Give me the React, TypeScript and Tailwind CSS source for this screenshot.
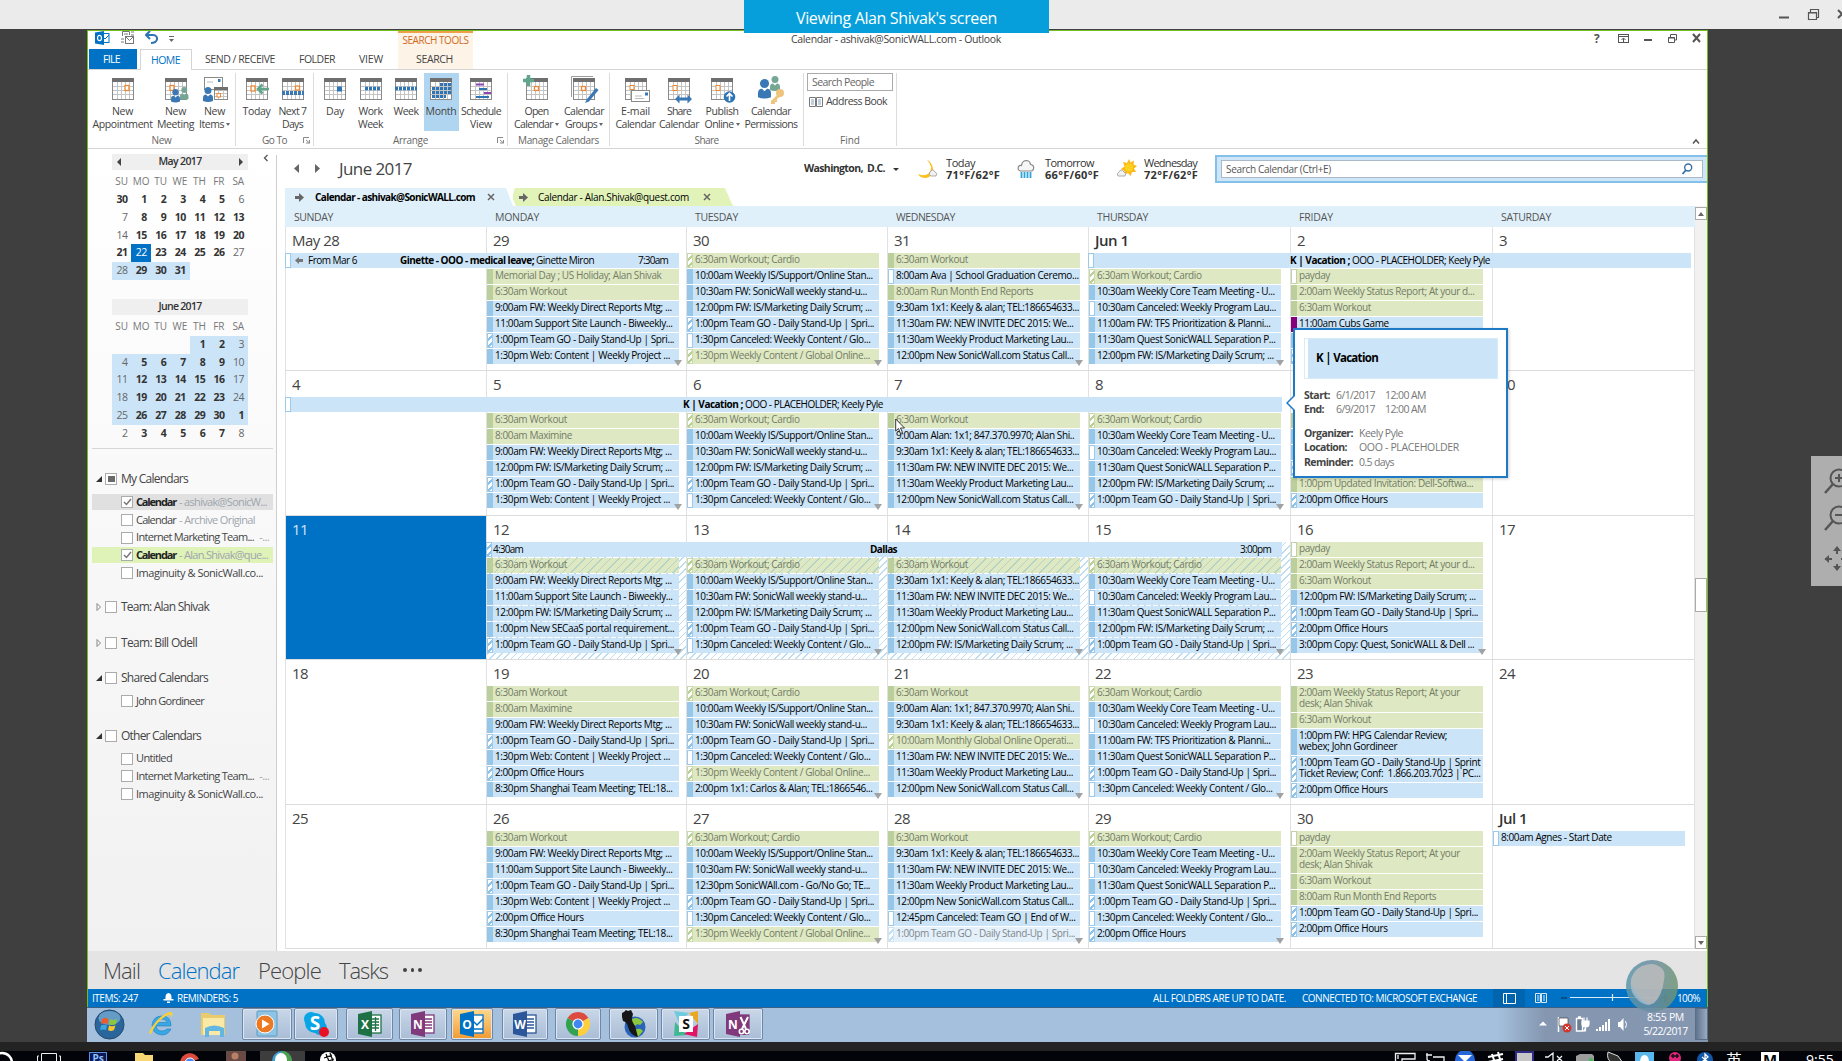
import React, { useLayoutEffect, useRef, ReactNode } from "react";

/** Text whose tracking is adjusted so that it fills exactly `w` pixels. */
function Fit({ w, className = "", children }: { w: number; className?: string; children: ReactNode }) {
  const ref = useRef<HTMLSpanElement>(null);
  useLayoutEffect(() => {
    const el = ref.current;
    if (!el) return;
    el.style.letterSpacing = "0px";
    const natural = el.getBoundingClientRect().width;
    const n = (el.textContent || "").length;
    el.style.letterSpacing = `${(w - natural) / n}px`;
  }, [w]);
  return (
    <span ref={ref} className={`inline-block whitespace-pre ${className}`}>
      {children}
    </span>
  );
}

/* ---------- calendar data: first char = colour (b/g/l), second = status (b/t/f/o) ---------- */
const WORK = "gb6:30am Workout";
const CARDIO = "gt6:30am Workout; Cardio";
const DIRECT = "bb9:00am FW: Weekly Direct Reports Mtg; ...";
const SITE = "bb11:00am Support Site Launch - Biweekly...";
const TEAM = "bt1:00pm Team GO - Daily Stand-Up | Spri...";
const WEB = "bb1:30pm Web: Content | Weekly Project ...";
const SUPPORT = "bb10:00am Weekly IS/Support/Online Stan...";
const STAND = "bb10:30am FW: SonicWall weekly stand-u...";
const SCRUM = "bb12:00pm FW: IS/Marketing Daily Scrum; ...";
const CANCEL = "bf1:30pm Canceled: Weekly Content / Glo...";
const GLOBAL = "gt1:30pm Weekly Content / Global Online...";
const KEELY = "bb9:30am 1x1: Keely & alan; TEL:186654633...";
const INVITE = "bb11:30am FW: NEW INVITE DEC 2015: We...";
const PRODUCT = "bb11:30am Weekly Product Marketing Lau...";
const STATUS = "bb12:00pm New SonicWall.com Status Call...";
const CORE = "bb10:30am Weekly Core Team Meeting - U...";
const PROGRAM = "bf10:30am Canceled: Weekly Program Lau...";
const TFS = "bb11:00am FW: TFS Prioritization & Planni...";
const QUEST = "bb11:30am Quest SonicWALL Separation P...";
const HOURS = "bt2:00pm Office Hours";
const ALAN = "bb9:00am Alan: 1x1; 847.370.9970; Alan Shi..";
const PAYDAY = "gfpayday";
const REPORT = "gb2:00am Weekly Status Report; At your d...";
const REPORT2 = "gb2:00am Weekly Status Report; At your\ndesk; Alan Shivak";
const SHANGHAI = "bb8:30pm Shanghai Team Meeting; TEL:18...";
const MAX = "gb8:00am Maximine";
const MONTH_END = "gb8:00am Run Month End Reports";

type Day = { n: string; ev?: string[]; skip?: boolean; more?: boolean; bold?: boolean; sel?: boolean; hatch?: boolean };

const weeks: Day[][] = [
  [
    { n: "May 28" },
    { n: "29", skip: true, more: true, ev: ["gbMemorial Day ; US Holiday; Alan Shivak", WORK, DIRECT, SITE, TEAM, WEB] },
    { n: "30", more: true, ev: [CARDIO, SUPPORT, STAND, SCRUM, TEAM, CANCEL, GLOBAL] },
    { n: "31", more: true, ev: [WORK, "bf8:00am Ava | School Graduation Ceremo...", MONTH_END, KEELY, INVITE, PRODUCT, STATUS] },
    { n: "Jun 1", bold: true, skip: true, more: true, ev: [CARDIO, CORE, PROGRAM, TFS, QUEST, SCRUM] },
    { n: "2", skip: true, ev: [PAYDAY, REPORT, WORK, "bo11:00am Cubs Game", "bb", "bt"] },
    { n: "3" },
  ],
  [
    { n: "4" },
    { n: "5", skip: true, more: true, ev: [WORK, MAX, DIRECT, SCRUM, TEAM, WEB] },
    { n: "6", skip: true, more: true, ev: [CARDIO, SUPPORT, STAND, SCRUM, TEAM, CANCEL] },
    { n: "7", skip: true, more: true, ev: [WORK, ALAN, KEELY, INVITE, PRODUCT, STATUS] },
    { n: "8", skip: true, more: true, ev: [CARDIO, CORE, PROGRAM, QUEST, SCRUM, TEAM] },
    { n: "9", skip: true, ev: ["gb", "bb", "bb", "bt", "gb1:00pm Updated Invitation: Dell-Softwa...", HOURS] },
    { n: "10" },
  ],
  [
    { n: "11", sel: true },
    { n: "12", skip: true, more: true, hatch: true, ev: [WORK, DIRECT, SITE, SCRUM, "bb1:00pm New SECaaS portal requirement...", TEAM] },
    { n: "13", skip: true, more: true, hatch: true, ev: [CARDIO, SUPPORT, STAND, SCRUM, TEAM, CANCEL] },
    { n: "14", skip: true, more: true, hatch: true, ev: [WORK, KEELY, INVITE, PRODUCT, STATUS, SCRUM] },
    { n: "15", skip: true, more: true, hatch: true, ev: [CARDIO, CORE, PROGRAM, QUEST, SCRUM, TEAM] },
    { n: "16", more: true, ev: [PAYDAY, REPORT, WORK, SCRUM, TEAM, HOURS, "bb3:00pm Copy: Quest, SonicWALL & Dell ..."] },
    { n: "17" },
  ],
  [
    { n: "18" },
    { n: "19", ev: [WORK, MAX, DIRECT, TEAM, WEB, HOURS, SHANGHAI] },
    { n: "20", more: true, ev: [CARDIO, SUPPORT, STAND, TEAM, CANCEL, GLOBAL, "bb2:00pm 1x1: Carlos & Alan; TEL:1866546..."] },
    { n: "21", more: true, ev: [WORK, ALAN, KEELY, "gt10:00am Monthly Global Online Operati...", INVITE, PRODUCT, STATUS] },
    { n: "22", more: true, ev: [CARDIO, CORE, PROGRAM, TFS, QUEST, TEAM, CANCEL] },
    {
      n: "23",
      ev: [
        REPORT2,
        WORK,
        "bb1:00pm FW: HPG Calendar Review;\nwebex; John Gordineer",
        "bt1:00pm Team GO - Daily Stand-Up | Sprint\nTicket Review; Conf:  1.866.203.7023 | PC...",
        HOURS,
      ],
    },
    { n: "24" },
  ],
  [
    { n: "25" },
    { n: "26", ev: [WORK, DIRECT, SITE, TEAM, WEB, HOURS, SHANGHAI] },
    { n: "27", more: true, ev: [CARDIO, SUPPORT, STAND, "bb12:30pm SonicWAll.com - Go/No Go; TE...", TEAM, CANCEL, GLOBAL] },
    { n: "28", more: true, ev: [WORK, KEELY, INVITE, PRODUCT, STATUS, "bf12:45pm Canceled: Team GO | End of W...", "lt1:00pm Team GO - Daily Stand-Up | Spri..."] },
    { n: "29", more: true, ev: [CARDIO, CORE, PROGRAM, QUEST, TEAM, CANCEL, HOURS] },
    { n: "30", ev: [PAYDAY, REPORT2, WORK, MONTH_END, TEAM, HOURS] },
    { n: "Jul 1", bold: true, ev: ["bf8:00am Agnes - Start Date"] },
  ],
];

const bgs: Record<string, string> = {
  b: "bg-[#cbe4f7] text-black",
  g: "bg-[#dee9c3] text-[#747b66]",
  l: "bg-[#e4f1fb] text-[#80868c]",
};
const bars: Record<string, string> = {
  bb: "bg-[#96c6e8]",
  bt: "border border-[#9ccaec] bg-[repeating-linear-gradient(135deg,#fff_0px,#fff_3px,#8cc3ea_3px,#8cc3ea_5px)]",
  bf: "border border-[#9ccaec] bg-white",
  bo: "bg-[#86007d]",
  gb: "bg-[#bbcf9c]",
  gt: "border border-[#c9d9a9] bg-[repeating-linear-gradient(135deg,#fff_0px,#fff_3px,#b9d094_3px,#b9d094_5px)]",
  gf: "border border-[#c3d2a4] bg-white",
  lt: "border border-[#cfe4f5] bg-[repeating-linear-gradient(135deg,#fff_0px,#fff_3px,#c4e0f4_3px,#c4e0f4_5px)]",
};

function EventRow({ code, hatch }: { code: string; hatch?: boolean }) {
  const text = code.slice(2);
  const two = text.includes("\n");
  return (
    <div className={`flex ${two ? "h-[26px]" : "h-[15px]"} w-[192px] shrink-0 ${bgs[code[0]]}`}>
      <div className={`w-[6px] shrink-0 ${bars[code.slice(0, 2)]}`} />
      <div
        className={`flex-1 whitespace-pre pl-[2px] text-[10px] tracking-[-0.4px] ${two ? "leading-[11px] pt-px" : "leading-[13px]"} ${
          hatch && code[0] === "g" ? "bg-[repeating-linear-gradient(135deg,transparent_0px,transparent_5px,#b5d3c4_5px,#b5d3c4_6px)]" : ""
        }`}
      >
        {text}
      </div>
    </div>
  );
}

function DayCell({ d, col }: { d: Day; col: number }) {
  const cols = ["col-start-1", "col-start-2", "col-start-3", "col-start-4", "col-start-5", "col-start-6", "col-start-7"];
  return (
    <div className={`${cols[col]} relative row-start-1 flex flex-col border-l border-[#e1e1e1] ${d.sel ? "bg-[#0072c6]" : ""}`}>
      <div
        className={`h-[26px] shrink-0 pl-[6px] text-[15px] leading-[26px] tracking-[-0.5px] ${
          d.sel ? "text-[#cfe6fa]" : d.bold ? "font-semibold text-[#333]" : "text-[#444]"
        }`}
      >
        {d.n}
      </div>
      <div
        className={`flex flex-1 flex-col gap-px ${d.skip ? "pt-4" : ""} ${
          d.hatch ? "bg-[repeating-linear-gradient(135deg,#fff_0px,#fff_4px,#bcdcf2_4px,#bcdcf2_5px)]" : ""
        }`}
      >
        {(d.ev || []).map((e, i) => (
          <EventRow key={i} code={e} hatch={d.hatch} />
        ))}
      </div>
      {d.more && <div className="absolute left-[187px] top-[133px] h-0 w-0 border-x-4 border-t-[6px] border-x-transparent border-t-[#a2a2a2]" />}
    </div>
  );
}

function Vacation() {
  return (
    <Fit w={200}>
      <b>K | Vacation ; </b>OOO - PLACEHOLDER; Keely Pyle
    </Fit>
  );
}

function Banner({ place, bar, children }: { place: string; bar: string; children: ReactNode }) {
  return (
    <div className={`z-10 row-start-1 mt-[26px] flex h-[15px] bg-[#cbe4f7] text-[10px] leading-[15px] text-black ${place}`}>
      <div className={`w-[6px] shrink-0 ${bars[bar]}`} />
      <div className="flex flex-1">{children}</div>
    </div>
  );
}

const banners: (ReactNode | null)[] = [
  <>
    <Banner place="col-start-1 col-span-2 mr-[7px]" bar="bf">
      <span className="ml-[4px] mr-[5px] flex items-center">
        <svg width="8" height="7" viewBox="0 0 8 7"><path d="M0 3.5 4 0V2H8V5H4V7Z" fill="#777" /></svg>
      </span>
      <Fit w={49}>From Mar 6</Fit>
      <Fit w={194} className="ml-[43px]"><b>Ginette - OOO - medical leave; </b>Ginette Miron</Fit>
      <Fit w={30} className="ml-[44px]">7:30am</Fit>
    </Banner>
    <Banner place="col-start-5 col-span-3 mr-[3px]" bar="bf">
      <span className="ml-[196px]"><Vacation /></span>
    </Banner>
  </>,
  <Banner place="col-start-1 col-span-5 mr-[8px]" bar="bf">
    <span className="ml-[392px]"><Vacation /></span>
  </Banner>,
  <Banner place="col-start-2 col-span-4 mr-[8px]" bar="bt">
    <Fit w={30} className="ml-[1px]">4:30am</Fit>
    <Fit w={27} className="ml-[347px] font-bold">Dallas</Fit>
    <Fit w={31} className="ml-[343px]">3:00pm</Fit>
  </Banner>,
  null,
  null,
];

/* ---------- ribbon icons ---------- */
function Grid({ children, mark }: { children?: ReactNode; mark?: boolean }) {
  return (
    <svg width="28" height="28" viewBox="0 0 28 28" className="overflow-visible">
      <rect x="3.5" y="3.5" width="21" height="21" fill="#fff" stroke="#8a8a8a" />
      <path d="M4 11.5H24M4 15.5H24M4 19.5H24M8.5 7V24M12.5 7V24M16.5 7V24M20.5 7V24" stroke="#c4c4c4" />
      <rect x="3" y="3" width="22" height="4" fill="#6f6f6f" />
      {mark && <rect x="11.5" y="11.5" width="4" height="4" fill="#fff" stroke="#ed8733" strokeWidth="1.3" />}
      {children}
    </svg>
  );
}
function Person({ x, y, c }: { x: number; y: number; c: string }) {
  return (
    <g fill={c} transform={`translate(${x} ${y})`}>
      <circle cx="5" cy="3.5" r="3.5" />
      <path d="M0 14V11Q0 7.5 3 7.5L5 9.5 7 7.5Q10 7.5 10 11V14Q5 16 0 14Z" />
    </g>
  );
}
const icons: Record<string, ReactNode> = {
  appt: <Grid><rect x="16" y="10.5" width="4" height="5" fill="#fff" stroke="#ed8733" strokeWidth="1.3" /></Grid>,
  meet: (
    <Grid>
      <rect x="8" y="10.5" width="4" height="5" fill="#fff" stroke="#ed8733" strokeWidth="1.3" />
      <g transform="translate(18 12) scale(.85)"><Person x={0} y={0} c="#76a795" /></g>
      <g transform="translate(9 14) scale(.9)"><Person x={0} y={0} c="#3a78b5" /></g>
    </Grid>
  ),
  items: (
    <svg width="28" height="28" viewBox="0 0 28 28">
      <rect x="3.5" y="2.5" width="18" height="12" fill="#fff" stroke="#8a8a8a" />
      <rect x="17" y="4" width="2.5" height="3" fill="#3a78b5" />
      <path d="M6 7H12" stroke="#bbb" />
      <rect x="13.5" y="13.5" width="13" height="11" fill="#fff" stroke="#8a8a8a" />
      <rect x="13" y="12" width="14" height="3.5" fill="#6f6f6f" />
      <path d="M14 18.5H26M14 21.5H26M17.5 15V24M22.5 15V24" stroke="#c4c4c4" />
      <rect x="16" y="18.5" width="3.5" height="3.5" fill="#fff" stroke="#ed8733" />
      <Person x={2} y={12} c="#3a78b5" />
    </svg>
  ),
  today: (
    <Grid>
      <rect x="8" y="11" width="4" height="5" fill="#fff" stroke="#ed8733" strokeWidth="1.3" />
      <path d="M26 14H16M19.5 9.5 15 14 19.5 18.5" fill="none" stroke="#5fa68a" strokeWidth="2.6" />
    </Grid>
  ),
  next7: (
    <Grid>
      <rect x="16.5" y="11" width="4" height="4" fill="#fff" stroke="#ed8733" strokeWidth="1.3" />
      <path d="M3 18H25" stroke="#3a78b5" strokeWidth="4" strokeDasharray="3 1" />
    </Grid>
  ),
  day: <Grid><rect x="16" y="11.5" width="5" height="5" fill="#2e75b6" /></Grid>,
  work: <Grid><path d="M8 13.5H23" stroke="#2e75b6" strokeWidth="3.5" strokeDasharray="3 1" /></Grid>,
  week: <Grid><path d="M3 13.5H25" stroke="#2e75b6" strokeWidth="3.5" strokeDasharray="3 1" /></Grid>,
  month: <Grid><path d="M13 9.5H24M5 13.5H24M5 17.5H24" stroke="#2e75b6" strokeWidth="3" strokeDasharray="3 1" /><path d="M5 21.5H19" stroke="#2e75b6" strokeWidth="3" strokeDasharray="3 1" /></Grid>,
  sched: (
    <Grid>
      <path d="M9 9.5H17" stroke="#8b46b5" strokeWidth="2" />
      <path d="M12 14H20" stroke="#2e75b6" strokeWidth="2" />
      <path d="M17 18H24" stroke="#8b46b5" strokeWidth="2" />
      <path d="M9 22H22" stroke="#2e75b6" strokeWidth="2" />
    </Grid>
  ),
  open: <Grid mark><path d="M5.5 0V11M0 5.5H11" stroke="#5fa68a" strokeWidth="3.5" /></Grid>,
  groups: (
    <Grid mark>
      <path d="M1.5 22V1.5H23" fill="none" stroke="#9a9a9a" />
      <path d="M26 13 17 24 15 28 19 26.500 28.500 15Z" fill="#3a78b5" />
    </Grid>
  ),
  email: (
    <Grid>
      <rect x="8" y="10.5" width="4" height="4" fill="#fff" stroke="#ed8733" />
      <rect x="9.5" y="15.5" width="18" height="11" fill="#fff" stroke="#8a8a8a" />
      <rect x="23" y="17.5" width="3" height="3" fill="#3a78b5" />
      <path d="M13 21H20M13 23.5H22" stroke="#bbb" />
    </Grid>
  ),
  share: (
    <Grid>
      <rect x="8" y="10.5" width="4" height="5" fill="#fff" stroke="#ed8733" />
      <path d="M10 24 14.5 19.5V22.5H22.5V19.5L27 24 22.5 28.5V25.5H14.5V28.5Z" fill="#3a78b5" />
    </Grid>
  ),
  publish: (
    <Grid>
      <rect x="8" y="10.5" width="4" height="5" fill="#fff" stroke="#ed8733" />
      <circle cx="21.5" cy="22" r="5.8" fill="#2e75b6" />
      <path d="M21.5 26V19M18.5 21.5 21.5 18.5 24.5 21.5" fill="none" stroke="#fff" strokeWidth="1.6" />
    </Grid>
  ),
  perms: (
    <svg width="28" height="28" viewBox="0 0 28 28" className="overflow-visible">
      <g transform="translate(13 1)"><Person x={0} y={0} c="#76a795" /></g>
      <g transform="translate(1 4) scale(1.3)"><Person x={0} y={0} c="#3a78b5" /></g>
      <circle cx="23" cy="18" r="4" fill="#efc57e" />
      <path d="M21 19 14 26V29H18V27H20V24L24 21Z" fill="#efc57e" />
    </svg>
  ),
};

function Btn({ icon, w, a, b, wa, wb, arrow, active }: { icon: string; w: string; a: string; b?: string; wa: number; wb?: number; arrow?: boolean; active?: boolean }) {
  return (
    <div className={`${w} flex h-[58px] shrink-0 flex-col items-center text-[10.5px] leading-[13px] text-[#444] ${active ? "bg-[#b0d5f0]" : ""}`}>
      <div className="mt-[2px] h-[30px] w-[28px]">{icons[icon]}</div>
      <Fit w={wa}>{a}</Fit>
      {b && (
        <div className="flex items-center gap-[2px]">
          <Fit w={wb || 30}>{b}</Fit>
          {arrow && <Caret />}
        </div>
      )}
    </div>
  );
}
function Caret() {
  return <i className="h-0 w-0 border-x-[2.5px] border-t-[3px] border-x-transparent border-t-[#666]" />;
}
function Group({ w, name, nameW, launcher, children }: { w: string; name: string; nameW: number; launcher?: boolean; children: ReactNode }) {
  return (
    <div className={`${w} flex h-[73px] shrink-0 flex-col border-r border-[#dcdcdc]`}>
      <div className="flex h-[62px] justify-center">{children}</div>
      <div className="flex h-3 items-center justify-center text-[10px] leading-3 text-[#666]">
        {launcher && <span className="w-3" />}
        <span className="flex flex-1 justify-center"><Fit w={nameW}>{name}</Fit></span>
        {launcher && (
          <svg width="12" height="8" viewBox="0 0 12 8"><path d="M2.5 7V1.5H8M5 4 8.5 7M8.5 4V7H5" fill="none" stroke="#888" /></svg>
        )}
      </div>
    </div>
  );
}

/* ---------- sidebar ---------- */
const DOW = ["SU", "MO", "TU", "WE", "TH", "FR", "SA"];
function MiniMonth({ title, arrows, rows, light, tint, today }: { title: string; arrows?: boolean; rows: string[][]; light: (r: number, c: number) => boolean; tint: (r: number, c: number) => boolean; today?: string }) {
  return (
    <div className="ml-[23px] w-[136px] text-[10.5px]">
      <div className="flex h-[16px] items-center justify-between bg-[#efefef] px-[5px] font-semibold text-[#333]">
        <i className={`h-0 w-0 border-y-[4px] border-r-[4px] border-y-transparent ${arrows ? "border-r-[#444]" : "border-r-transparent"}`} />
        <Fit w={43}>{title}</Fit>
        <i className={`h-0 w-0 border-y-[4px] border-l-[4px] border-y-transparent ${arrows ? "border-l-[#444]" : "border-l-transparent"}`} />
      </div>
      <div className="grid h-[21px] grid-cols-7 text-center leading-[22px] text-[#777]">
        {DOW.map((d) => <span key={d} className="text-[10px]">{d}</span>)}
      </div>
      {rows.map((row, r) => (
        <div key={r} className="grid h-[17.75px] grid-cols-7 leading-[17.75px]">
          {row.map((n, c) => (
            <span
              key={c}
              className={`pr-[4px] text-right tracking-[-0.5px] ${
                n && n === today ? "bg-[#0072c6] text-white" : `${tint(r, c) ? "bg-[#cbe4f7]" : ""} ${light(r, c) ? "text-[#666]" : "font-bold text-[#333]"}`
              }`}
            >
              {n}
            </span>
          ))}
        </div>
      ))}
    </div>
  );
}
const may = [
  ["30", "1", "2", "3", "4", "5", "6"],
  ["7", "8", "9", "10", "11", "12", "13"],
  ["14", "15", "16", "17", "18", "19", "20"],
  ["21", "22", "23", "24", "25", "26", "27"],
  ["28", "29", "30", "31", "", "", ""],
];
const june = [
  ["", "", "", "", "1", "2", "3"],
  ["4", "5", "6", "7", "8", "9", "10"],
  ["11", "12", "13", "14", "15", "16", "17"],
  ["18", "19", "20", "21", "22", "23", "24"],
  ["25", "26", "27", "28", "29", "30", "1"],
  ["2", "3", "4", "5", "6", "7", "8"],
];
const mayLight = ["0,6", "1,0", "2,0", "3,6", "4,0"];
const juneLight = ["0,6", "1,0", "1,6", "2,0", "2,6", "3,0", "3,6", "4,0", "5,0", "5,6"];

function Box({ state }: { state?: "check" | "mixed" }) {
  return (
    <span className="flex h-[12px] w-[12px] shrink-0 items-center justify-center border border-[#ababab] bg-white">
      {state === "mixed" && <i className="h-[6px] w-[7px] bg-[#6a6a6a]" />}
      {state === "check" && <svg width="9" height="8" viewBox="0 0 9 8"><path d="M1 4 3.5 6.5 8 1" fill="none" stroke="#777" strokeWidth="1.5" /></svg>}
    </span>
  );
}
function Section({ name, w, open, mixed, mt }: { name: string; w: number; open?: boolean; mixed?: boolean; mt: string }) {
  return (
    <div className={`${mt} flex h-[18px] items-center pl-[4px] text-[12px] text-[#444]`}>
      <span className="flex w-[9px]">
        <svg width="7" height="8" viewBox="0 0 7 8">
          {open ? <path d="M6 1V7H0Z" fill="#333" /> : <path d="M1 0.5 4.5 4 1 7.5Z" fill="none" stroke="#888" />}
        </svg>
      </span>
      <Box state={mixed ? "mixed" : undefined} />
      <Fit w={w} className="ml-[4px]">{name}</Fit>
    </div>
  );
}
function Cal({ name, w, extra, we, bg, check, bold }: { name: string; w: number; extra?: string; we?: number; bg?: string; check?: boolean; bold?: boolean }) {
  return (
    <div className="flex h-[17.75px] items-center text-[11px]">
      <div className={`flex h-[16px] w-[181px] items-center pl-[29px] ${bg || ""}`}>
        <Box state={check ? "check" : undefined} />
        <Fit w={w} className={`ml-[3px] ${bold ? "font-bold text-[#222]" : "text-[#444]"}`}>{name}</Fit>
        {extra && <Fit w={we || 30} className="ml-[3px] text-[#9ea5ae]">{extra}</Fit>}
      </div>
    </div>
  );
}

/* ---------- taskbar ---------- */
function OfficeTile({ letter, color, kind }: { letter: string; color: string; kind?: string }) {
  return (
    <svg width="26" height="26" viewBox="0 0 26 26">
      <rect x="12" y="4" width="12" height="18" fill="#fff" stroke={color} strokeWidth="1.3" />
      {kind === "mail" ? <path d="M13 9 18 14 24 8M13 18H24" fill="none" stroke={color} strokeWidth="1.5" /> : <path d="M15 8H22M15 11H22M15 14H22M15 17H22" stroke={color} strokeWidth="1.6" />}
      {kind === "grid" && <path d="M18.5 6V20" stroke={color} strokeWidth="1.3" />}
      <path d="M1 3 15 0V26L1 23Z" fill={color} />
      <text x="8" y="17.5" fontSize="12" fontWeight="700" fill="#fff" textAnchor="middle" fontFamily="Open Sans">{letter}</text>
      {kind === "cut" && (
        <>
          <rect x="14" y="4" width="10" height="20" fill={color} />
          <path d="M15.500 6 21 18M23 6 17 18" stroke="#fff" strokeWidth="2" fill="none" />
          <circle cx="16.500" cy="20.500" r="2.200" fill="none" stroke="#fff" strokeWidth="1.600" />
          <circle cx="22" cy="20.500" r="2.200" fill="none" stroke="#fff" strokeWidth="1.600" />
        </>
      )}
    </svg>
  );
}
function Chrome() {
  return (
    <svg width="26" height="26" viewBox="0 0 26 26">
      <path d="M13 13 2.600 7A12 12 0 0 1 23.400 7Z" fill="#dd4b3e" />
      <path d="M13 13 2.600 7A12 12 0 0 0 13 25L17 18Z" fill="#31a251" />
      <path d="M13 13 23.400 7A12 12 0 0 1 13 25Z" fill="#fdcf3c" />
      <circle cx="13" cy="13" r="5.600" fill="#fff" />
      <circle cx="13" cy="13" r="4.400" fill="#4286f2" />
    </svg>
  );
}
const tiles: [string, ReactNode][] = [
  ["ml-[14px] w-[50px]", <svg width="26" height="28" viewBox="0 0 26 28"><rect x="3" y="1" width="20" height="25" rx="1" fill="#8fc4e4" stroke="#5c9cc4" /><circle cx="11" cy="14" r="9" fill="#ec7a23" stroke="#fff" /><path d="M8 9.500 15.500 14 8 18.500Z" fill="#fff" /></svg>],
  ["ml-[2px] w-[44px]", <svg width="28" height="28" viewBox="0 0 28 28"><circle cx="9" cy="9" r="7" fill="#0aa5e6" /><circle cx="18" cy="18" r="7" fill="#0aa5e6" /><circle cx="13" cy="13" r="10" fill="#0aa5e6" /><text x="13" y="20" fontSize="19" fontWeight="700" fill="#fff" textAnchor="middle" fontFamily="Open Sans">S</text><circle cx="22" cy="22" r="5" fill="#e81123" /></svg>],
  ["ml-[8px] w-[47px]", <OfficeTile letter="X" color="#1e7145" kind="grid" />],
  ["ml-[6px] w-[48px]", <OfficeTile letter="N" color="#80397b" />],
  ["ml-[4px] w-[42px]", <OfficeTile letter="O" color="#0072c6" kind="mail" />],
  ["ml-[9px] w-[46px]", <OfficeTile letter="W" color="#2b579a" />],
  ["ml-[7px] w-[46px]", <Chrome />],
  ["ml-[8px] w-[49px]", <svg width="28" height="30" viewBox="0 0 28 30"><circle cx="15" cy="18" r="10.500" fill="#2a63b8" /><path d="M12 10Q18 7 23 13L20 16Q17 14 15 17 12 16 12 10ZM15 21Q20 18 23 22L18 28Q14 26 15 21Z" fill="#8cc63f" /><path d="M2 4 4 3 6 1 8 2 11 1 13 5 12 9Q11 11 15 17L18 28Q10 26 8 18 7 13 3 12L2 8Z" fill="#161616" /></svg>],
  ["ml-[3px] w-[49px]", <svg width="26" height="28" viewBox="0 0 26 28"><path d="M1 1 16 3 6 13Z" fill="#6ecadc" /><path d="M16 3 25 1 25 14Z" fill="#e9a820" /><path d="M2 12 1 26 14 25Z" fill="#3eb991" /><path d="M25 14 24 27 11 24Z" fill="#e01563" /><rect x="6" y="6" width="14" height="16" fill="#fff" /><text x="13" y="19" fontSize="14" fontWeight="700" fill="#111" textAnchor="middle" fontFamily="Open Sans">S</text></svg>],
  ["ml-[3px] w-[50px]", <OfficeTile letter="N" color="#80397b" kind="cut" />],
];

const dayNames: [string, number][] = [["SUNDAY", 39], ["MONDAY", 44], ["TUESDAY", 43], ["WEDNESDAY", 59], ["THURSDAY", 51], ["FRIDAY", 34], ["SATURDAY", 50]];

function Weather({ day, wd, temp, children }: { day: string; wd: number; temp: string; children: ReactNode }) {
  return (
    <div className="flex w-[99px] items-center">
      <div className="w-[28px]">{children}</div>
      <div className="flex flex-col items-start text-[11px] leading-[12px] text-[#333]">
        <Fit w={wd}>{day}</Fit>
        <Fit w={54} className="font-bold">{temp}</Fit>
      </div>
    </div>
  );
}

export default function App() {
  return (
    <div className="relative flex h-[1061px] w-[1842px] flex-col overflow-hidden bg-[#3f3f3f] [font-family:'Open_Sans','Noto_Sans',sans-serif]">
      {/* viewer title bar */}
      <div className="flex h-[29px] shrink-0 bg-[#ebebeb]">
        <div className="z-20 ml-[744px] h-[33px] w-[305px] bg-[#079fdb] text-center text-[16px] leading-[36px] text-white"><Fit w={201}>Viewing Alan Shivak's screen</Fit></div>
        <svg className="ml-[726px] mt-[8px]" width="67" height="14" viewBox="0 0 67 14">
          <path d="M4 9.500H14" stroke="#555" strokeWidth="2" />
          <path d="M33.500 4.500H41.500V11.500H33.500ZM35.500 4V1.500H43.500V9.500H42M33 5H42" fill="none" stroke="#555" strokeWidth="1.200" />
          <path d="M63 2 71 10M71 2 63 10" stroke="#555" strokeWidth="2" />
        </svg>
      </div>

      {/* shared screen */}
      <div className="ml-[87px] flex w-[1621px] shrink-0 flex-col">
        <div className="mt-px flex h-[977px] flex-col border border-[#74bd1e] bg-white">
          {/* title + tabs */}
          <div className="flex h-[38px] shrink-0 flex-col">
            <div className="flex h-[18px]">
              <div className="flex w-[95px] items-start gap-[10px] pl-[7px]">
                <svg width="15" height="15" viewBox="0 0 15 15"><rect x="6" y="2.500" width="8" height="9" fill="#fff" stroke="#0072c6" /><path d="M7 5 10 8 14 4" fill="none" stroke="#0072c6" /><path d="M0 1.500 9 0V14L0 12.500Z" fill="#0072c6" /><ellipse cx="4.500" cy="7" rx="2" ry="2.600" fill="none" stroke="#fff" strokeWidth="1.200" /></svg>
                <svg width="15" height="15" viewBox="0 0 15 15"><path d="M2.500 5V.5H9.500V4M11 1H14M11 4H14M1 8H4M1 11H4" fill="none" stroke="#777" /><rect x="5.500" y="5.500" width="8" height="7" fill="#fff" stroke="#777" /><path d="M6 6 9.500 9.500 13 6M4 3H8" fill="none" stroke="#777" /></svg>
                <svg width="14" height="14" viewBox="0 0 14 14"><path d="M5 0 1 4 5 8M1.500 4H8Q12.500 4.500 12 8.500 11 12 6 12" fill="none" stroke="#2e75b6" strokeWidth="2" /></svg>
                <svg className="mt-[5px]" width="6" height="8" viewBox="0 0 6 8"><path d="M0 .5H5" stroke="#666" /><path d="M0 3H5L2.500 6Z" fill="#666" /></svg>
              </div>
              <div className="ml-[215px] h-[38px] w-[75px] shrink-0 border-t-2 border-[#f0a04b] bg-[#fdf3e7] text-center text-[10px] leading-[15px] text-[#d26a1c]"><Fit w={66}>SEARCH TOOLS</Fit></div>
              <div className="ml-[318px] text-[10.500px] leading-[17px] text-[#444]"><Fit w={210}>Calendar - ashivak@SonicWALL.com - Outlook</Fit></div>
              <svg className="ml-[590px]" width="115" height="16" viewBox="0 0 115 16" fill="none" stroke="#555">
                <text x="3" y="12" fontSize="12" fontWeight="700" fill="#555" stroke="none" fontFamily="Open Sans">?</text>
                <rect x="27.500" y="3.500" width="10" height="8" /><path d="M27 5.500H38M32.500 11V7M30.500 9 32.500 7 34.500 9" />
                <path d="M53 9H61" strokeWidth="2" />
                <path d="M77.500 6.500H83.500V11.500H77.500ZM79.500 6V3.500H85.500V9H84M77 7H84" />
                <path d="M102 3 109 11M109 3 102 11" strokeWidth="2" />
              </svg>
            </div>
            <div className="flex h-5 shrink-0 items-stretch text-[10.500px] leading-[21px] text-[#444]">
              <div className="ml-px w-[48px] bg-[#0072c6] pl-[14px] text-white"><Fit w={17}>FILE</Fit></div>
              <div className="z-10 ml-[3px] h-[21px] w-[52px] border border-b-0 border-[#d4d4d4] bg-white pl-[10px] text-[#0072c6]"><Fit w={29}>HOME</Fit></div>
              <Fit w={70} className="ml-[13px]">SEND / RECEIVE</Fit>
              <Fit w={36} className="ml-[24px]">FOLDER</Fit>
              <Fit w={24} className="ml-[24px]">VIEW</Fit>
              <Fit w={37} className="z-10 ml-[33px]">SEARCH</Fit>
            </div>
          </div>

          {/* ribbon */}
          <div className="flex h-[80px] shrink-0 border-y border-[#d4d4d4] pt-[3px]">
            <Group w="w-[148px]" name="New" nameW={20}>
              <Btn icon="appt" w="w-[60px]" a="New" wa={21} b="Appointment" wb={60} />
              <Btn icon="meet" w="w-[46px]" a="New" wa={21} b="Meeting" wb={37} />
              <Btn icon="items" w="w-[32px]" a="New" wa={21} b="Items" wb={25} arrow />
            </Group>
            <Group w="w-[78px]" name="Go To" nameW={25} launcher>
              <Btn icon="today" w="w-[36px]" a="Today" wa={28} />
              <Btn icon="next7" w="w-[36px]" a="Next 7" wa={28} b="Days" wb={21} />
            </Group>
            <Group w="w-[194px]" name="Arrange" nameW={35} launcher>
              <Btn icon="day" w="w-[35px]" a="Day" wa={18} />
              <Btn icon="work" w="w-[36px]" a="Work" wa={24} b="Week" wb={25} />
              <Btn icon="week" w="w-[35px]" a="Week" wa={25} />
              <Btn icon="month" w="w-[35px]" a="Month" wa={31} active />
              <Btn icon="sched" w="w-[45px]" a="Schedule" wa={40} b="View" wb={22} />
            </Group>
            <Group w="w-[102px]" name="Manage Calendars" nameW={81}>
              <Btn icon="open" w="w-[51px]" a="Open" wa={24} b="Calendar" wb={39} arrow />
              <Btn icon="groups" w="w-[44px]" a="Calendar" wa={40} b="Groups" wb={32} arrow />
            </Group>
            <Group w="w-[194px]" name="Share" nameW={24}>
              <Btn icon="email" w="w-[43px]" a="E-mail" wa={29} b="Calendar" wb={40} />
              <Btn icon="share" w="w-[44px]" a="Share" wa={24} b="Calendar" wb={40} />
              <Btn icon="publish" w="w-[42px]" a="Publish" wa={33} b="Online" wb={29} arrow />
              <Btn icon="perms" w="w-[56px]" a="Calendar" wa={40} b="Permissions" wb={53} />
            </Group>
            <Group w="w-[93px]" name="Find" nameW={20}>
              <div className="flex flex-col text-[10.500px] text-[#444]">
                <div className="h-[18px] w-[86px] border border-[#ababab] pl-[4px] leading-[16px] text-[#666]"><Fit w={62}>Search People</Fit></div>
                <div className="mt-[3px] flex items-center gap-[3px] pl-[2px] leading-[15px]">
                  <svg width="14" height="12" viewBox="0 0 14 12"><path d="M.5 1.500H6.500V10.500H.5ZM7.500 1.500H13.500V10.500H7.500Z" fill="#fff" stroke="#777" /><path d="M2 4H5M2 6H5M2 8H5M9 4H12M9 6H12M9 8H12" stroke="#7c9dc0" /></svg>
                  <Fit w={61}>Address Book</Fit>
                </div>
              </div>
            </Group>
            <svg className="ml-auto mr-[7px] mt-[65px]" width="8" height="7" viewBox="0 0 8 7"><path d="M1 5.500 4 2 7 5.500" fill="none" stroke="#555" strokeWidth="1.500" /></svg>
          </div>

          {/* body */}
          <div className="flex h-[802px] shrink-0">
            <div className="flex w-[188px] shrink-0 flex-col bg-linear-to-b from-white to-[#f1f1f1] pl-px pt-[5px]">
              <div className="flex">
                <MiniMonth title="May 2017" arrows rows={may} today="22" light={(r, c) => mayLight.includes(`${r},${c}`)} tint={(r, c) => r === 4 && c < 4} />
                <svg className="ml-[15px]" width="6" height="8" viewBox="0 0 6 8"><path d="M4.500 1 1.500 4 4.500 7" fill="none" stroke="#555" strokeWidth="1.300" /></svg>
              </div>
              <div className="mt-[19px]">
                <MiniMonth title="June 2017" rows={june} light={(r, c) => juneLight.includes(`${r},${c}`)} tint={(r, c) => (r === 0 ? c > 3 : r < 5)} />
              </div>
              <div className="ml-[3px] mt-[6px] h-px w-[181px] shrink-0 bg-[#d6d6d6]" />
              <div className="ml-[3px] flex flex-col">
                <Section name="My Calendars" w={67} open mixed mt="mt-[21px]" />
                <div className="h-[5px]" />
                <Cal name="Calendar" w={40} extra="- ashivak@SonicW..." we={88} bg="bg-[#e0e0e0]" check bold />
                <Cal name="Calendar" w={40} extra="- Archive Original" we={76} />
                <Cal name="Internet Marketing Team..." w={118} extra=" -..." we={12} />
                <Cal name="Calendar" w={40} extra="- Alan.Shivak@que..." we={89} bg="bg-[#dff2b7]" check bold />
                <Cal name="Imaginuity & SonicWall.co..." w={127} />
                <Section name="Team: Alan Shivak" w={88} mt="mt-[16px]" />
                <Section name="Team: Bill Odell" w={76} mt="mt-[18px]" />
                <Section name="Shared Calendars" w={87} open mt="mt-[17px]" />
                <div className="h-[5px]" />
                <Cal name="John Gordineer" w={68} />
                <Section name="Other Calendars" w={80} open mt="mt-[17px]" />
                <div className="h-[5px]" />
                <Cal name="Untitled" w={36} />
                <Cal name="Internet Marketing Team..." w={118} extra=" -..." we={12} />
                <Cal name="Imaginuity & SonicWall.co..." w={127} />
              </div>
            </div>
            <div className="mt-[6px] w-px shrink-0 bg-[#cfcfcf]" />

            <div className="flex w-[1430px] shrink-0 flex-col pl-[8px] pt-[6px]">
              {/* month header */}
              <div className="flex h-[28px] items-center">
                <svg className="ml-[9px]" width="26" height="10" viewBox="0 0 26 10"><path d="M5 0V9L0 4.500ZM21 0V9L26 4.500Z" fill="#666" /></svg>
                <Fit w={73} className="ml-[19px] text-[17px] leading-[28px] text-[#444]">June 2017</Fit>
                <Fit w={81} className="ml-[392px] text-[10.500px] font-bold text-[#333]">Washington,  D.C.</Fit>
                <i className="ml-[8px] h-0 w-0 border-x-[3px] border-t-[3.500px] border-x-transparent border-t-[#333]" />
                <div className="ml-[19px] flex">
                  <Weather day="Today" wd={29} temp="71°F/62°F">
                    <svg width="20" height="20" viewBox="0 0 20 20"><path d="M9 1Q16 8 11 14 7 18 0 15 2 19 8 19 15 18 15 10 14 3 9 1Z" fill="#fcbf1c" /><path d="M13 17Q10 16 12 13 15 9 17 13 20 14 18 17Z" fill="#f2f2f2" stroke="#999" strokeWidth=".8" /></svg>
                  </Weather>
                  <Weather day="Tomorrow" wd={49} temp="66°F/60°F">
                    <svg width="18" height="20" viewBox="0 0 18 20"><path d="M3.500 12Q0 11 1.500 7.500 3 6 4.500 6.500 5 2 9 1.500 13 1.500 13.500 5.500 17.500 6 16.500 10 16 12 14 12Z" fill="#f6f6f6" stroke="#888" strokeWidth="1.200" /><path d="M4.500 13V19M7.500 13V19M10.500 13V19M13.500 13V19" stroke="#2ba3dd" strokeWidth="1.800" /></svg>
                  </Weather>
                  <Weather day="Wednesday" wd={53} temp="72°F/62°F">
                    <svg width="21" height="20" viewBox="0 0 21 20"><path d="M13 0 14.500 3.500 18 1.500 17.500 5.500 21 7 18 9.500 20 13 16 13 14.500 17 12 14 8 16 8.500 12 5 10 8.500 7.500 7 3 11 4Z" fill="#fbb91a" /><circle cx="13" cy="8.500" r="4" fill="#fdd21e" /><path d="M2 17Q0 15 3 13 5 9 8 13 11 14 9 17Z" fill="#f2f2f2" stroke="#999" strokeWidth=".8" /></svg>
                  </Weather>
                </div>
                <div className="ml-auto flex h-[28px] w-[492px] items-center border-2 border-r-0 border-[#84c1ea] bg-[#cfe6f8] pl-[4px] pr-[4px]">
                  <div className="flex h-[18px] flex-1 items-center justify-between border border-[#a9b9c8] bg-white pl-[4px] pr-[9px] text-[10px] leading-[16px] text-[#555]">
                    <Fit w={105}>Search Calendar (Ctrl+E)</Fit>
                    <svg width="12" height="12" viewBox="0 0 12 12"><circle cx="7.200" cy="4.500" r="3.500" fill="none" stroke="#3a6ea5" strokeWidth="1.400" /><path d="M5 7 1.500 11" stroke="#3a6ea5" strokeWidth="1.800" /></svg>
                  </div>
                </div>
              </div>
              {/* calendar tabs */}
              <div className="mt-[5px] flex h-[18px] text-[10px] leading-[16px] text-black">
                <div className="flex w-[228px] items-center bg-[#dff0fa] pl-[10px] [clip-path:polygon(0_0,221px_0,228px_18px,0_18px)]">
                  <Arrow />
                  <Fit w={160} className="ml-[11px] font-bold">Calendar - ashivak@SonicWALL.com</Fit>
                  <Cross />
                </div>
                <div className="flex w-[220px] items-center bg-[#e1f3b9] pl-[6px] [clip-path:polygon(2px_0,212px_0,220px_18px,3px_18px,-1px_9px)]">
                  <Arrow />
                  <Fit w={151} className="ml-[10px] mr-[2px]">Calendar - Alan.Shivak@quest.com</Fit>
                  <Cross />
                </div>
              </div>
              {/* grid */}
              <div className="flex">
                <div className="flex w-[1410px] flex-col">
                  <div className="grid h-[21px] grid-cols-[201px_200px_201px_201px_202px_202px_202px] bg-[#dff0fa] text-[10.500px] leading-[22px] text-[#555]">
                    {dayNames.map(([d, w]) => <span key={d} className="pl-[9px]"><Fit w={w}>{d}</Fit></span>)}
                  </div>
                  <div className="grid h-[722px] grid-rows-5 border-r border-[#e1e1e1]">
                    {weeks.map((wk, i) => (
                      <div key={i} className="grid grid-cols-[201px_200px_201px_201px_202px_202px_202px] border-b border-[#dcdcdc]">
                        {wk.map((d, c) => <DayCell key={c} d={d} col={c} />)}
                        {banners[i]}
                      </div>
                    ))}
                  </div>
                </div>
                <div className="flex h-[743px] w-[12px] flex-col bg-[#f1f1f1]">
                  <div className="mt-px flex h-[13px] items-center justify-center border border-[#ababab] bg-white"><i className="h-0 w-0 border-x-[3px] border-b-[4px] border-x-transparent border-b-[#666]" /></div>
                  <div className="mt-[358px] h-[34px] border border-[#ababab] bg-white" />
                  <div className="mt-auto flex h-[13px] items-center justify-center border border-[#ababab] bg-white"><i className="h-0 w-0 border-x-[3px] border-t-[4px] border-x-transparent border-t-[#666]" /></div>
                </div>
              </div>
            </div>
          </div>

          {/* navigation */}
          <div className="flex h-[38px] shrink-0 items-center bg-[#e4e4e4] pl-[15px] text-[22px] font-light text-[#444]">
            <Fit w={37}>Mail</Fit>
            <Fit w={81} className="ml-[18px] text-[#0072c6]">Calendar</Fit>
            <Fit w={63} className="ml-[19px]">People</Fit>
            <Fit w={49} className="ml-[18px]">Tasks</Fit>
            <span className="ml-[15px] flex gap-[4px]"><i className="size-[3.500px] rounded-full bg-[#444]" /><i className="size-[3.500px] rounded-full bg-[#444]" /><i className="size-[3.500px] rounded-full bg-[#444]" /></span>
          </div>
          {/* status bar */}
          <div className="flex flex-1 items-center bg-[#0072c6] pl-[4px] text-[10px] leading-[18px] text-white">
            <Fit w={46}>ITEMS: 247</Fit>
            <svg className="ml-[25px]" width="11" height="10" viewBox="0 0 11 10"><path d="M5.500 0Q8.500 .5 8.500 4V6H10.500V7.500H.5V6H2.500V4Q2.500 .5 5.500 0ZM4 8.500H7V10H4Z" fill="#fff" /></svg>
            <Fit w={61} className="ml-[3px]">REMINDERS: 5</Fit>
            <Fit w={133} className="ml-[915px]">ALL FOLDERS ARE UP TO DATE.</Fit>
            <Fit w={175} className="ml-[16px]">CONNECTED TO: MICROSOFT EXCHANGE</Fit>
            <span className="ml-[16px] flex h-full w-[32px] items-center justify-center bg-[#005a9e]/60"><svg width="13" height="11" viewBox="0 0 13 11"><path d="M.5 .5H12.500V10.500H.5ZM3.500 0V11" fill="none" stroke="#fff" /></svg></span>
            <svg className="ml-[10px]" width="12" height="12" viewBox="0 0 12 12"><path d="M.5 1.500H5.500V10.500H.5ZM6.500 1.500H11.500V10.500H6.500ZM2 4H4.500M2 6H4.500M2 8H4.500M8 4H10M8 6H10M8 8H10" fill="none" stroke="#d9e9f6" /></svg>
            <svg className="ml-[14px]" width="108" height="12" viewBox="0 0 108 12"><path d="M0 6H6M100 6H108M104 2V10" stroke="#0b4f88" strokeWidth="2" /><path d="M9 5.500H94M51.500 2V9" stroke="#d9e9f6" strokeWidth="1.200" /></svg>
            <Fit w={23} className="ml-[8px]">100%</Fit>
          </div>
        </div>

        {/* shared taskbar */}
        <div className="flex h-[35px] shrink-0 items-center border-t border-[#3c5f86] bg-linear-to-r from-[#a5c0dd] from-87% to-[#8496b0] to-90% pb-[2px] text-white">
          <svg className="ml-[7px]" width="31" height="31" viewBox="0 0 31 31"><circle cx="15.500" cy="15.500" r="14.500" fill="#2a669c" stroke="#24496c" /><ellipse cx="15.500" cy="9" rx="11" ry="7" fill="#7fb4d8" opacity=".7" /><path d="M8 10Q11 8 14.500 10L13.500 15Q10 13.500 7 15Z" fill="#ee5a2c" /><path d="M16 10Q19 12 23 10L22 15Q18 17 15 15Z" fill="#8cc63f" /><path d="M7 16.500Q10 15 13 16.500L12 21Q9 20 6 21Z" fill="#3da5e0" /><path d="M15 16.500Q18 18 21.500 16.500L20 21Q17 23 14 21Z" fill="#fbc52c" /></svg>
          <svg className="ml-[23px]" width="28" height="28" viewBox="0 0 28 28"><path d="M23 16H8Q9 21 14 21 17 21 19 19H23Q20 25 14 25 4 24 4 15 5 6 14 6 23 6 23 16ZM8.500 12.500H19Q18 9 14 9 10 9 8.500 12.500Z" fill="#39a7e3" stroke="#1f7fc0" strokeWidth=".6" /><path d="M3 24Q-1 25 4 17 12 5 21 2 27 1 23 8 24 3 18 6 8 12 3 24Z" fill="#f7cf3c" /></svg>
          <svg className="ml-[24px]" width="28" height="28" viewBox="0 0 28 28"><path d="M1 3H9L11 5H25V25H1Z" fill="#e9cb6c" /><path d="M3 8H24V25H3Z" fill="#f9e9a6" /><path d="M5 27V18Q14 13 24 18V27H20V21H9V27Z" fill="#62b6e2" /></svg>
          {tiles.map(([c, icon], i) => (
            <div key={i} className={`${c} flex h-[32px] shrink-0 items-center justify-center rounded-[2px] border border-[#6f87a5] shadow-[inset_0_0_0_1px_#dbe6f2] ${i === 4 ? "bg-linear-to-b from-[#fbd98c] to-[#f29a2e]" : "bg-linear-to-b from-[#c9d7e8] to-[#a9bdd6]"}`}>{icon}</div>
          ))}
          <div className="ml-auto flex h-full items-center">
            <svg width="96" height="20" viewBox="0 0 96 20">
              <path d="M4 11.500H12L8 7.500Z" fill="#fff" />
              <path d="M23.500 3V18" stroke="#fff" strokeWidth="1.500" /><path d="M24 4H33V12H24Z" fill="#fff" stroke="#444" strokeWidth=".7" /><circle cx="32" cy="14" r="4.500" fill="#d2372f" /><path d="M30 12 34 16M34 12 30 16" stroke="#fff" />
              <path d="M41.500 4.500H47.500V17H41.500ZM43 3H46" fill="#6c7d96" stroke="#fff" strokeWidth="1.400" /><path d="M47 7H54V10Q54 13 50.500 13 47 13 47 10ZM49 3.500V7M52 3.500V7M50.500 13V17H48" fill="#fff" stroke="#fff" strokeWidth="1.200" />
              <path d="M62 17V15M65 17V13M68 17V11M71 17V8M74 17V5" stroke="#fff" strokeWidth="2" />
              <path d="M83 8H85L88.500 4V17L85 13H83Z" fill="#fff" /><path d="M90.500 7Q92.500 10.500 90.500 14" fill="none" stroke="#fff" />
            </svg>
            <div className="ml-[12px] flex w-[45px] flex-col items-center text-[10.500px] leading-[14px]">
              <Fit w={37}>8:55 PM</Fit>
              <Fit w={44}>5/22/2017</Fit>
            </div>
            <div className="ml-[7px] h-full w-[13px] border border-[#5c6d86] bg-linear-to-r from-[#5f7390] to-[#9aabc2]" />
          </div>
        </div>
      </div>

      {/* host taskbar */}
      <div className="h-[9px] shrink-0 bg-[#232323]" />
      <div className="flex h-[10px] shrink-0 items-start overflow-hidden bg-[#020409]">
        <svg width="345" height="10" viewBox="0 0 345 10">
          <circle cx="2" cy="12" r="10" fill="none" stroke="#fff" strokeWidth="2.500" />
          <path d="M41.500 12V2.500H56.500V12M37.500 12V5H39M60.500 12V5H59" fill="none" stroke="#eee" />
          <rect x="89.500" y="1.500" width="17" height="14" fill="#0b1a56" stroke="#5c8fdc" />
          <text x="98" y="11" fontSize="10" fontWeight="700" fill="#8fc3ff" textAnchor="middle" fontFamily="Open Sans">Ps</text>
          <path d="M135 2H143L145 4H153V12H135Z" fill="#f7d774" />
          <path d="M180 11A10 10 0 0 1 199 8L190 11Z" fill="#dd4b3e" /><circle cx="190" cy="12" r="5" fill="#4286f2" stroke="#fff" />
          <rect x="226" y="0" width="20" height="12" fill="#6a4a44" /><circle cx="235" cy="5" r="3.500" fill="#b98068" />
          <rect x="260" y="0" width="45" height="10" fill="#3d3d3d" />
          <circle cx="282" cy="10" r="10" fill="#3f9fcf" /><path d="M282 0A10 10 0 0 1 292 10H282Z" fill="#4ea04a" /><ellipse cx="281" cy="9" rx="6" ry="7" fill="#fff" />
          <circle cx="328" cy="9" r="8" fill="#fff" /><path d="M324 7 332 4M326 11 334 8M326 3 329 10M330 2 333 10" stroke="#111" strokeWidth="1.300" />
        </svg>
        <svg className="ml-auto" width="452" height="10" viewBox="0 0 452 10">
          <path d="M5.500 12V2.500H25V8H12V12M8 4V8" fill="none" stroke="#eee" strokeWidth="1.300" />
          <path d="M37 2V8Q37 10 40 10M36 4H42M43 6H54V12" fill="none" stroke="#eee" strokeWidth="1.300" />
          <circle cx="75" cy="9" r="10" fill="#2668d8" /><path d="M68 4H82L75 11Z" fill="#fff" />
          <path d="M98 6 113 3M98 11 113 8M102 3 105 12M108 1 111 12" stroke="#fff" strokeWidth="2" fill="none" />
          <rect x="126" y="1" width="17" height="12" fill="#c7c7c7" stroke="#2f2b86" strokeWidth="2" />
          <path d="M155 6H158L163 2V12M167 5 172 10M172 5 167 10" fill="none" stroke="#eee" strokeWidth="1.300" />
          <path d="M186 5 190 3H202L204 5V12H186Z" fill="#9c9c9c" /><circle cx="201" cy="9" r="2" fill="#3dbb5a" />
          <path d="M218 1 228 5 233 12H222Q216 8 218 1Z" fill="#333" stroke="#ddd" />
          <rect x="245" y="1" width="19" height="12" fill="#57b7ec" /><path d="M250 12Q250 4 254.500 4 259 4 259 12Z" fill="#fff" />
          <ellipse cx="285" cy="7" rx="6" ry="6" fill="#e0247c" /><path d="M281 5H289M283 3V7M287 3V7" stroke="#111" strokeWidth="1.500" />
          <circle cx="315" cy="9" r="8" fill="#1257a8" /><path d="M312 6 318 11M315 12V3L318 6 312 11" fill="none" stroke="#fff" strokeWidth="1.300" />
          <text x="336" y="15" fontSize="16" fill="#fff" fontFamily="Noto Sans CJK SC">英</text>
          <rect x="371" y="1" width="18" height="12" fill="#fff" /><text x="380" y="14" fontSize="15" fontWeight="700" fill="#000" textAnchor="middle" fontFamily="Open Sans">M</text>
          <text x="416" y="14" fontSize="14" fill="#fff" fontFamily="Open Sans">9:55</text>
        </svg>
      </div>

      {/* appointment tooltip */}
      <div className="absolute left-[1293px] top-[328px] z-30 h-[150px] w-[215px] border-2 border-[#1f7ac6] bg-white px-[9px] pt-[8px] text-[10.500px] leading-[14.400px] text-[#777] shadow-[1px_1px_3px_#0003]">
        <svg className="absolute left-[-9px] top-[64px]" width="9" height="18" viewBox="0 0 9 18"><path d="M9 1 1 9 9 17" fill="#fff" stroke="#1f7ac6" strokeWidth="1.500" /></svg>
        <div className="flex h-[41px] w-[194px] items-center border border-[#d8ebf9] bg-[#cbe4f7]">
          <div className="h-full w-[3px] bg-white" />
          <Fit w={62} className="ml-[8px] text-[11.500px] font-bold text-black">K | Vacation</Fit>
        </div>
        <div className="mt-[9px] flex"><b className="w-[32px] text-[#444]"><Fit w={26}>Start:</Fit></b><Fit w={39}>6/1/2017</Fit><Fit w={41} className="ml-[10px]">12:00 AM</Fit></div>
        <div className="flex"><b className="w-[32px] text-[#444]"><Fit w={20}>End:</Fit></b><Fit w={39}>6/9/2017</Fit><Fit w={41} className="ml-[10px]">12:00 AM</Fit></div>
        <div className="mt-[9px] flex"><b className="w-[55px] text-[#444]"><Fit w={49}>Organizer:</Fit></b><Fit w={44}>Keely Pyle</Fit></div>
        <div className="flex"><b className="w-[55px] text-[#444]"><Fit w={43}>Location:</Fit></b><Fit w={100}>OOO - PLACEHOLDER</Fit></div>
        <div className="flex"><b className="w-[55px] text-[#444]"><Fit w={49}>Reminder:</Fit></b><Fit w={35}>0.5 days</Fit></div>
      </div>

      {/* pointer */}
      <svg className="absolute left-[895px] top-[418px] z-30" width="11" height="17" viewBox="0 0 11 17"><path d="M.7 1V13L3.500 10.500 5.500 15.500 7.500 14.500 5.500 10H9.500Z" fill="#fff" stroke="#222" strokeWidth=".9" /></svg>

      {/* session ball */}
      <svg className="absolute left-[1626px] top-[960px] z-30" width="52" height="52" viewBox="0 0 52 52">
        <defs><linearGradient id="ball" x1="0" x2="1"><stop offset="0" stopColor="#5b97ab" /><stop offset=".5" stopColor="#6a8da3" /><stop offset="1" stopColor="#6f9472" /></linearGradient></defs>
        <circle cx="26" cy="26" r="26" fill="url(#ball)" opacity=".85" />
        <path d="M5 19Q10 4 27 4 41 7 38 20 36 36 28 43 22 47 14 40 3 31 5 19Z" fill="#bcbcbc" opacity=".85" />
        <path d="M5 24Q14 40 25 45 16 46 9 37 4 31 5 24Z" fill="#9eb6c8" opacity=".8" />
      </svg>

      {/* zoom tools */}
      <svg className="absolute left-[1811px] top-[456px]" width="31" height="130" viewBox="0 0 31 130" fill="none" stroke="#555" strokeWidth="2">
        <rect width="31" height="130" fill="#aeaeae" stroke="none" />
        <circle cx="28" cy="22" r="8.500" /><path d="M22 28 14 37" strokeWidth="2.500" /><path d="M24 22H32M28 18V26" />
        <circle cx="28" cy="59" r="8.500" /><path d="M22 65 14 74" strokeWidth="2.500" /><path d="M24 59H32" />
        <path d="M26 91V98M26 108V114M14 103H21M30 103H36" /><path d="M22 95 26 90 30 95ZM22 110 26 115 30 110ZM18 99 13.500 103 18 107Z" fill="#555" stroke="none" />
      </svg>
    </div>
  );
}

function Arrow() {
  return <svg width="9" height="9" viewBox="0 0 9 9"><path d="M0 3H4V0L9 4.500 4 9V6H0Z" fill="#666" /></svg>;
}
function Cross() {
  return <svg className="ml-[12px]" width="8" height="8" viewBox="0 0 8 8"><path d="M1 1 7 7M7 1 1 7" stroke="#666" strokeWidth="1.500" /></svg>;
}
